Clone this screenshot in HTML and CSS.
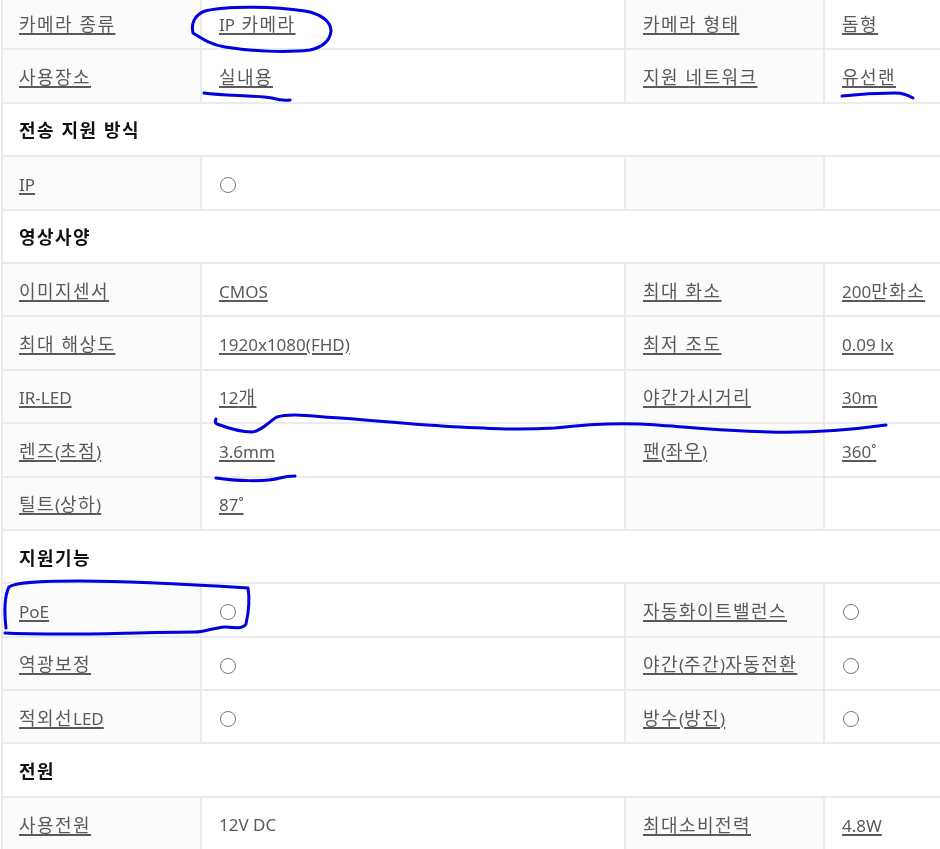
FILE: index.html
```html
<!DOCTYPE html>
<html lang="ko">
<head>
<meta charset="utf-8">
<title>카메라 사양</title>
<link rel="stylesheet" href="styles.css">
</head>
<body>
<div class="page">
<table class="spec">
<colgroup><col class="c1"><col class="c2"><col class="c3"><col class="c4"></colgroup>
<tbody>
<tr><th><a>카메라 종류</a></th><td><a><span class="lat">IP</span> 카메라</a></td><th><a>카메라 형태</a></th><td><a>돔형</a></td></tr>
<tr><th><a>사용장소</a></th><td><a>실내용</a></td><th><a>지원 네트워크</a></th><td><a>유선랜</a></td></tr>
<tr><td class="section" colspan="4">전송 지원 방식</td></tr>
<tr><th><a class="lat">IP</a></th><td><span class="dot"></span></td><th></th><td></td></tr>
<tr><td class="section" colspan="4">영상사양</td></tr>
<tr><th><a>이미지센서</a></th><td><a class="lat">CMOS</a></td><th><a>최대 화소</a></th><td><a><span class="lat">200</span>만화소</a></td></tr>
<tr><th><a>최대 해상도</a></th><td><a class="lat">1920x1080(FHD)</a></td><th><a>최저 조도</a></th><td><a class="lat">0.09 lx</a></td></tr>
<tr><th><a class="lat">IR-LED</a></th><td><a><span class="lat">12</span>개</a></td><th><a>야간가시거리</a></th><td><a class="lat">30m</a></td></tr>
<tr><th><a>렌즈<span class="lat">(</span>초점<span class="lat">)</span></a></th><td><a class="lat">3.6mm</a></td><th><a>팬<span class="lat">(</span>좌우<span class="lat">)</span></a></th><td><a class="lat">360˚</a></td></tr>
<tr><th><a>틸트<span class="lat">(</span>상하<span class="lat">)</span></a></th><td><a class="lat">87˚</a></td><th></th><td></td></tr>
<tr><td class="section" colspan="4">지원기능</td></tr>
<tr><th><a class="lat">PoE</a></th><td><span class="dot"></span></td><th><a>자동화이트밸런스</a></th><td><span class="dot"></span></td></tr>
<tr><th><a>역광보정</a></th><td><span class="dot"></span></td><th><a>야간<span class="lat">(</span>주간<span class="lat">)</span>자동전환</a></th><td><span class="dot"></span></td></tr>
<tr><th><a>적외선<span class="lat">LED</span></a></th><td><span class="dot"></span></td><th><a>방수<span class="lat">(</span>방진<span class="lat">)</span></a></th><td><span class="dot"></span></td></tr>
<tr><td class="section" colspan="4">전원</td></tr>
<tr><th><a>사용전원</a></th><td class="lat plain">12V DC</td><th><a>최대소비전력</a></th><td><a class="lat">4.8W</a></td></tr>
</tbody>
</table>
<svg class="ink" width="940" height="849" viewBox="0 0 940 849" fill="none" stroke="#0000e0" stroke-width="3" stroke-linecap="round" stroke-linejoin="round">
<path d="M193 33C191 24 194 15 205 11C225 6 270 6 305 11C322 14 331 22 331 31C330 41 323 47 310 50C285 53 250 51 225 47C212 45 204 40 193 33"/>
<path d="M204 93C225 96 250 95 272 98C279 100 284 101 290 100"/>
<path d="M842 96C860 94 880 93 895 93C903 93 908 95 913 98"/>
<path d="M216 419C215 421 215 423 217 424C225 427 240 432 252 432C262 431 268 422 277 417C290 413 310 416 340 418C380 421 420 425 460 427C500 429 520 430 555 428C580 425 610 423 640 424C680 426 720 431 770 432C810 433 850 430 886 425"/>
<path d="M216 478C235 481 265 482 280 478C287 476 291 476 295 476"/>
<path d="M6 628C4 610 5 595 9 587C15 582 40 581 80 581C130 581 200 585 248 588C250 600 248 615 246 624C243 629 235 628 225 627C212 628 205 632 195 632C160 632 110 634 70 634C40 634 20 634 5 633"/>
</svg>
</div>
</body>
</html>
```

FILE: styles.css
```css
html, body {
  margin: 0;
  padding: 0;
  background: #fff;
}
.page {
  position: relative;
  width: 940px;
  height: 849px;
  overflow: hidden;
}
.spec {
  border-collapse: collapse;
  table-layout: fixed;
  width: 943px;
  margin: -5px 0 0 1px;
  font-family: "Noto Sans CJK KR", sans-serif;
  font-size: 18px;
  letter-spacing: 1.44px;
  color: #5a5a5a;
  filter: blur(0.4px);
}
.c1 { width: 199px; }
.c2 { width: 424px; }
.c3 { width: 199px; }
.spec tr { height: 53.4px; }
.spec th, .spec td {
  border: 2px solid #ebebeb;
  padding: 0 0 0 17px;
  text-align: left;
  font-weight: 400;
  background: #fff;
}
.spec th { background: #fbfbfb; }
.spec tr > :first-child { padding-left: 16px; }
.spec a {
  text-decoration: underline;
  text-decoration-thickness: 1.5px;
  text-underline-offset: 2px;
}
.spec .lat {
  font-family: "Noto Sans", sans-serif;
  font-size: 17px;
  letter-spacing: 0;
}
.spec .plain { padding-top: 2px; }
.spec td.section {
  font-weight: 700;
  color: #111;
  background: #fff;
}
.dot {
  display: block;
  box-sizing: border-box;
  width: 16px;
  height: 16px;
  border: 1.6px solid #777;
  border-radius: 50%;
  margin: 5px 0 0 1px;
}
.ink {
  position: absolute;
  left: 0;
  top: 0;
}
```
